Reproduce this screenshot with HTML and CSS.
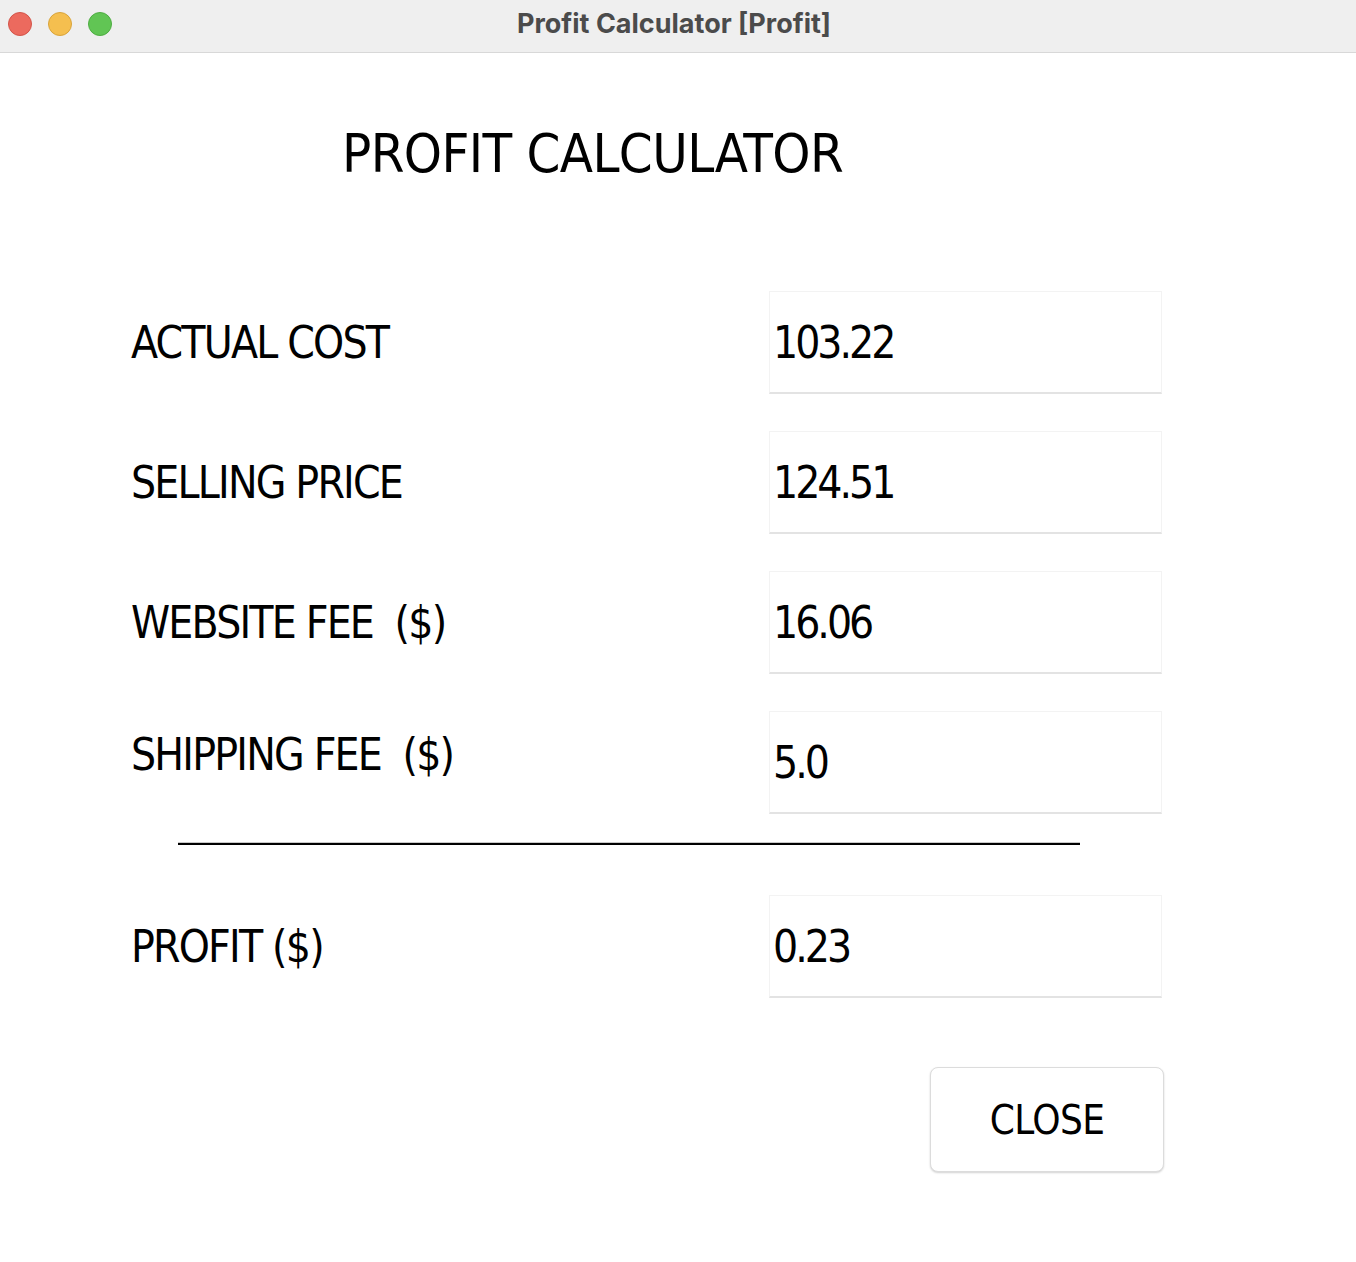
FILE: index.html
```html
<!DOCTYPE html>
<html>
<head>
<meta charset="utf-8">
<link rel="stylesheet" href="styles.css">
</head>
<body>
<div class="window">
  <div class="titlebar">
    <div class="lights">
      <span class="light red"></span>
      <span class="light yellow"></span>
      <span class="light green"></span>
    </div>
    <div class="wintitle">Profit Calculator [Profit]</div>
  </div>
  <div class="content">
    <h1 class="heading">PROFIT CALCULATOR</h1>
    <div class="form">
      <div class="label">ACTUAL COST</div>
      <div class="field">103.22</div>
      <div class="label">SELLING PRICE</div>
      <div class="field">124.51</div>
      <div class="label">WEBSITE FEE&nbsp; ($)</div>
      <div class="field">16.06</div>
      <div class="label raised">SHIPPING FEE&nbsp; ($)</div>
      <div class="field">5.0</div>
    </div>
    <div class="separator"></div>
    <div class="form result">
      <div class="label">PROFIT ($)</div>
      <div class="field">0.23</div>
    </div>
    <div class="actions">
      <button class="btn">CLOSE</button>
    </div>
  </div>
</div>
</body>
</html>
```
FILE: styles.css
```css
html, body {
  margin: 0;
  padding: 0;
  background: #ffffff;
}
.window {
  width: 1356px;
  height: 1262px;
  background: #ffffff;
  font-family: "DejaVu Sans Condensed", "DejaVu Sans", sans-serif;
  font-stretch: condensed;
  color: #000;
}
.titlebar {
  box-sizing: border-box;
  height: 53px;
  padding-bottom: 5px;
  background: #efefef;
  border-bottom: 1px solid #d8d8d8;
  display: grid;
  align-items: center;
}
.lights, .wintitle {
  grid-area: 1 / 1;
}
.lights {
  display: flex;
  gap: 16px;
  padding-left: 8px;
}
.light {
  width: 24px;
  height: 24px;
  border-radius: 50%;
  box-sizing: border-box;
}
.red { background: #ec6a5e; border: 1px solid #d35449; }
.yellow { background: #f5bf4f; border: 1px solid #d9a43b; }
.green { background: #61c554; border: 1px solid #4ead42; }
.wintitle {
  text-align: center;
  font-family: Inter, "Noto Sans", sans-serif;
  font-stretch: normal;
  font-weight: 700;
  font-size: 27px;
  line-height: 32px;
  color: #4b4b4b;
  padding-right: 8px;
}
.content {
  padding-left: 131px;
}
.heading {
  margin: 0;
  padding: 69px 0 0 211px;
  font-size: 54px;
  font-weight: 400;
  line-height: 64px;
  letter-spacing: -0.6px;
}
.form {
  display: grid;
  grid-template-columns: 638px 393px;
  grid-auto-rows: 103px;
  row-gap: 37px;
  margin-top: 105px;
}
.label, .field {
  font-size: 44px;
  letter-spacing: -1.8px;
  display: flex;
  align-items: center;
}
.label.raised {
  padding-bottom: 16px;
}
.field {
  box-sizing: border-box;
  padding-left: 3px;
  letter-spacing: -3px;
  border: 1px solid #f3f3f3;
  border-bottom: 2px solid #e3e3e3;
  background: #fff;
}
.separator {
  width: 902px;
  margin: 28px 0 0 47px;
  height: 2px;
  background: #000;
  border-top: 1px solid #c8c8c8;
}
.form.result {
  margin-top: 50px;
}
.actions {
  padding: 69px 0 0 799px;
}
.btn {
  width: 234px;
  height: 105px;
  background: #fff;
  border: 1px solid #dcdcdc;
  border-radius: 8px;
  box-shadow: 0 1px 2px rgba(0,0,0,0.18);
  font-family: "DejaVu Sans Condensed", "DejaVu Sans", sans-serif;
  font-stretch: condensed;
  font-size: 40px;
  letter-spacing: -0.6px;
  color: #000;
  padding: 0;
}
```
